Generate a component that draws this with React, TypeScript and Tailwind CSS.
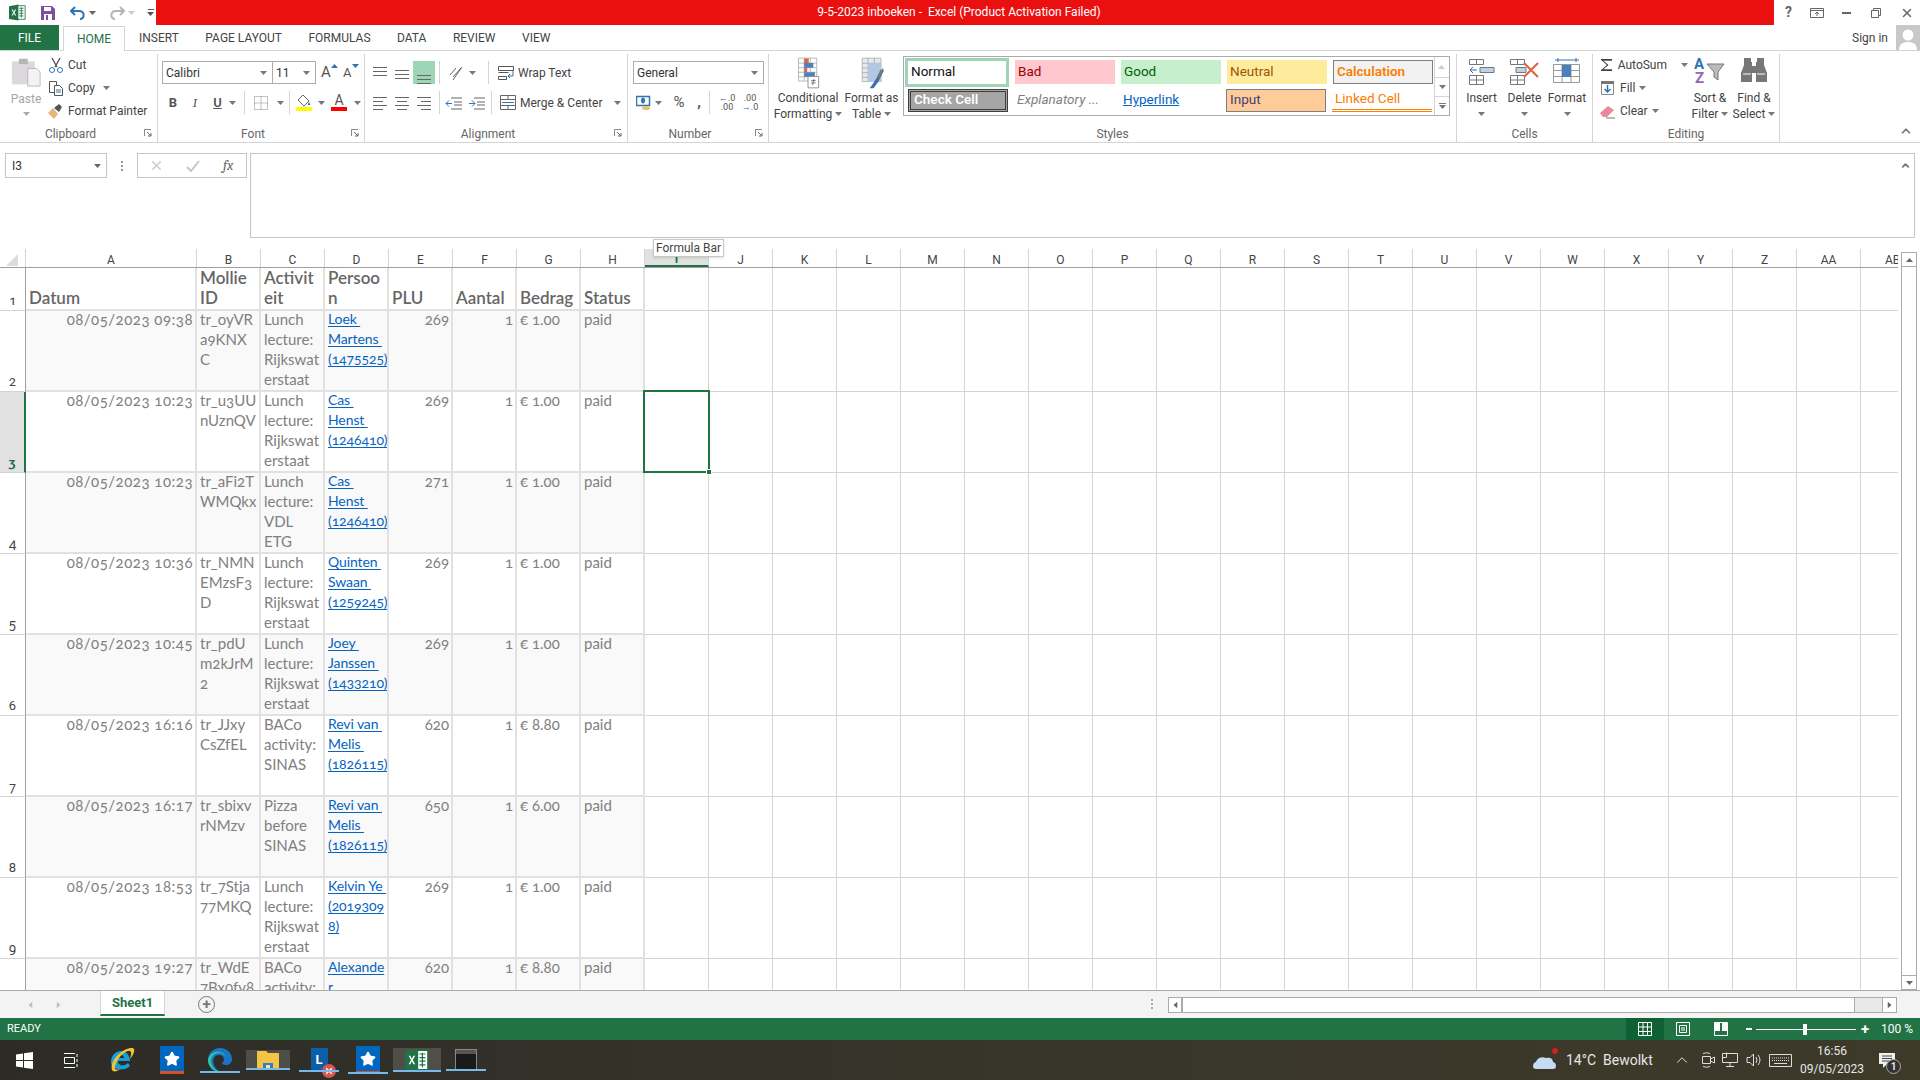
import type { ReactNode } from "react";
import { ChevronUp, Star, X } from "lucide-react";

const CHROME = "font-['Roboto','Liberation_Sans',sans-serif]";
const SHEET = "font-['Lato','Liberation_Sans',sans-serif]";

const COLUMNS = ["J", "K", "L", "M", "N", "O", "P", "Q", "R", "S", "T", "U", "V", "W", "X", "Y", "Z", "AA"];

type Row = {
  id: number;
  date: string;
  mollie: string[];
  activity: string[];
  person: string[];
  plu: string;
  amount: string;
};

const LUNCH = ["Lunch", "lecture:", "Rijkswat", "erstaat"];
const SINAS = ["BACo", "activity:", "SINAS"];

const ROWS: Row[] = [
  { id: 2, date: "08/05/2023 09:38", mollie: ["tr_oyVR", "a9KNX", "C"], activity: LUNCH, person: ["Loek ", "Martens ", "(1475525)"], plu: "269", amount: "1.00" },
  { id: 3, date: "08/05/2023 10:23", mollie: ["tr_u3UU", "nUznQV"], activity: LUNCH, person: ["Cas ", "Henst ", "(1246410)"], plu: "269", amount: "1.00" },
  { id: 4, date: "08/05/2023 10:23", mollie: ["tr_aFi2T", "WMQkx"], activity: ["Lunch", "lecture:", "VDL", "ETG"], person: ["Cas ", "Henst ", "(1246410)"], plu: "271", amount: "1.00" },
  { id: 5, date: "08/05/2023 10:36", mollie: ["tr_NMN", "EMzsF3", "D"], activity: LUNCH, person: ["Quinten ", "Swaan ", "(1259245)"], plu: "269", amount: "1.00" },
  { id: 6, date: "08/05/2023 10:45", mollie: ["tr_pdU", "m2kJrM", "2"], activity: LUNCH, person: ["Joey ", "Janssen ", "(1433210)"], plu: "269", amount: "1.00" },
  { id: 7, date: "08/05/2023 16:16", mollie: ["tr_JJxy", "CsZfEL"], activity: SINAS, person: ["Revi van ", "Melis ", "(1826115)"], plu: "620", amount: "8.80" },
  { id: 8, date: "08/05/2023 16:17", mollie: ["tr_sbixv", "rNMzv"], activity: ["Pizza", "before", "SINAS"], person: ["Revi van ", "Melis ", "(1826115)"], plu: "650", amount: "6.00" },
  { id: 9, date: "08/05/2023 18:53", mollie: ["tr_7Stja", "77MKQ"], activity: LUNCH, person: ["Kelvin Ye ", "(2019309", "8)"], plu: "269", amount: "1.00" },
  { id: 10, date: "08/05/2023 19:27", mollie: ["tr_WdE", "7Bx0fv8", "S"], activity: ["BACo", "activity:", "SINAS"], person: ["Alexande", "r"], plu: "620", amount: "8.80" },
];

function Caret({ color = "#777" }: { color?: string }) {
  return (
    <svg width="7" height="4" viewBox="0 0 7 4" className="shrink-0">
      <path d="M0 0h7L3.5 4z" fill={color} />
    </svg>
  );
}

function ExcelLogo({ size = 20 }: { size?: number }) {
  return (
    <svg width={size} height={size} viewBox="0 0 20 20">
      <path d="M10 2h9v16h-9z" fill="#fff" stroke="#217346" />
      <path d="M12 5h5M12 8h5M12 11h5M12 14h5M14.500 4v12" stroke="#217346" />
      <path d="M0 2.500 11 .5v19L0 17.500z" fill="#217346" />
      <path d="m3 6.500 1.500 0L5.700 9 7 6.500h1.500L6.500 10l2 3.500H7L5.700 11l-1.300 2.500H3L5 10z" fill="#fff" />
    </svg>
  );
}

function Lines({ rows, color = "#666" }: { rows: [number, number, number][]; color?: string }) {
  return (
    <svg width="18" height="16" viewBox="0 0 18 16">
      {rows.map(([x1, x2, y]) => (
        <path key={`${x1}-${y}`} d={`M${x1} ${y + 0.5}H${x2}`} stroke={color} />
      ))}
    </svg>
  );
}

function Sep({ className = "h-[23px]" }: { className?: string }) {
  return <div className={`w-px bg-[#d4d4d4] ${className}`} />;
}

function Launcher() {
  return (
    <svg width="8" height="8" viewBox="0 0 8 8" className="absolute right-[5px] bottom-[6px]">
      <path d="M.5 7V.5H7" fill="none" stroke="#888" />
      <path d="M3 3l4 4M4 7h3V4" fill="none" stroke="#666" />
    </svg>
  );
}

function Group({ width, label, launcher, children }: { width: string; label: string; launcher?: boolean; children: ReactNode }) {
  return (
    <div className={`relative flex h-[89px] shrink-0 flex-col border-r border-[#d4d4d4] ${width}`}>
      <div className="min-h-0 flex-1">{children}</div>
      <div className={`h-[18px] text-center text-[12px] leading-[18px] text-[#666] ${launcher ? "pr-[16px]" : ""}`}>{label}</div>
      {launcher && <Launcher />}
    </div>
  );
}

function StyleCell({ className, children }: { className: string; children: ReactNode }) {
  return <div className={`flex w-[100px] shrink-0 items-center truncate pr-1 pb-[2px] pl-[3px] text-[13.5px] ${className}`}>{children}</div>;
}

function Ribbon() {
  return (
    <div className={`flex h-[93px] shrink-0 overflow-hidden border-y border-[#d4d4d4] bg-white pt-[3px] text-[12px] text-[#444] ${CHROME}`}>
      <Group width="w-[158px]" label="Clipboard" launcher>
        <div className="flex">
          <div className="flex w-[48px] flex-col items-center pt-[2px] text-[#a6a6a6]">
            <svg width="30" height="32" viewBox="0 0 34 36" className="ml-[4px]">
              <path d="M1 6h26v26H1z" fill="#dcd8dc" />
              <path d="M9 3h10v6H9z" fill="#b8b4b8" />
              <path d="M19 14h10l4 4v16H19z" fill="#f4f2f4" stroke="#b5b5b5" />
            </svg>
            <span className="mt-[1px] ml-[4px] leading-[20px]">Paste</span>
            <div className="mt-[3px] ml-[4px]">
              <Caret color="#aaa" />
            </div>
          </div>
          <div className="-mt-[1px] flex flex-col">
            <div className="flex h-[23px] items-center gap-[4px]">
              <svg width="16" height="16" viewBox="0 0 16 16">
                <path d="M4 1l5 9M12 1L7 10" stroke="#555" strokeWidth="1.400" />
                <circle cx="4" cy="13" r="2.500" fill="none" stroke="#2f75b5" />
                <circle cx="12" cy="13" r="2.500" fill="none" stroke="#2f75b5" />
              </svg>
              <span>Cut</span>
            </div>
            <div className="flex h-[23px] items-center gap-[4px]">
              <svg width="16" height="16" viewBox="0 0 16 16" fill="#fff" stroke="#555">
                <path d="M1.500 1.500h7v11h-7z" />
                <path d="M6.500 5.500h5l3 3v7h-8z" />
                <path d="M8 10h5M8 12h5" stroke="#2f75b5" />
              </svg>
              <span>Copy</span>
              <div className="ml-[4px]">
                <Caret />
              </div>
            </div>
            <div className="flex h-[23px] items-center gap-[4px]">
              <svg width="16" height="16" viewBox="0 0 16 16">
                <path d="M0 10l5-5 5 6-4 5z" fill="#e3b778" />
                <path d="M6 5l5-4 3 3-3 5z" fill="#555" />
              </svg>
              <span>Format Painter</span>
            </div>
          </div>
        </div>
      </Group>

      <Group width="w-[207px]" label="Font" launcher>
        <div className="flex items-center pt-[7px] pl-[4px]">
          <div className="flex h-[23px] w-[111px] items-center justify-between border border-[#ababab] pr-[5px] pl-[3px] text-[#333]">
            Calibri
            <Caret />
          </div>
          <div className="-ml-px flex h-[23px] w-[44px] items-center justify-between border border-[#ababab] pr-[5px] pl-[3px] text-[#333]">
            11
            <Caret />
          </div>
          <div className="relative ml-[5px] w-[22px] text-[15px] leading-none text-[#555]">
            A
            <div className="absolute top-[-1px] left-[10px] rotate-180">
              <Caret color="#2f75b5" />
            </div>
          </div>
          <div className="relative w-[20px] text-[13px] leading-none text-[#555]">
            A
            <div className="absolute top-[-2px] left-[9px]">
              <Caret color="#2f75b5" />
            </div>
          </div>
        </div>
        <div className="mt-[7px] flex h-[23px] items-center pl-[3px] text-[13px] text-[#555]">
          <span className="w-[22px] pl-[2px] text-center font-bold">B</span>
          <span className="ml-[1px] w-[22px] text-center font-serif italic">I</span>
          <span className="w-[23px] text-center font-semibold underline">U</span>
          <Caret />
          <Sep className="mx-[8px] h-[23px]" />
          <svg width="16" height="16" viewBox="0 0 16 16" className="mr-[8px]">
            <path d="M1.500 1.500h13v13h-13zM8 1.500v13M1.500 8h13" fill="none" stroke="#888" strokeDasharray="1 1" />
          </svg>
          <Caret />
          <Sep className="mx-[5px] h-[23px]" />
          <div className="flex w-[18px] flex-col items-center">
            <svg width="14" height="13" viewBox="0 0 14 13">
              <path d="M6 1l6 6-5 5-6-6z" fill="#fff" stroke="#666" />
              <path d="M12 8l1.500 3h-3z" fill="#2f75b5" />
            </svg>
            <div className="h-[4px] w-[16px] bg-[#ffff00]" />
          </div>
          <div className="ml-[5px]">
            <Caret />
          </div>
          <div className="ml-[5px] flex w-[18px] flex-col items-center text-[14px] leading-[13px]">
            A
            <div className="h-[4px] w-[16px] bg-[#ff0000]" />
          </div>
          <div className="ml-[6px]">
            <Caret />
          </div>
        </div>
      </Group>

      <Group width="w-[263px]" label="Alignment" launcher>
        <div className="flex h-[30px] items-center pt-[7px] pl-[4px]">
          <div className="flex w-[22px] justify-center">
            <Lines rows={[[2, 16, 2], [2, 16, 6], [2, 16, 10]]} />
          </div>
          <div className="flex w-[22px] justify-center">
            <Lines rows={[[2, 16, 5], [2, 16, 9], [2, 16, 13]]} />
          </div>
          <div className="flex h-[23px] w-[22px] items-end justify-center bg-[#9fd5b7]">
            <Lines rows={[[2, 16, 7], [2, 16, 11], [2, 16, 15]]} />
          </div>
          <Sep className="mx-[4px] h-[23px]" />
          <svg width="18" height="18" viewBox="0 0 18 18" className="ml-[4px]">
            <path d="M2 11l6-7M5 13l8-9M14 3l-9 13" stroke="#666" fill="none" />
          </svg>
          <div className="mr-[12px] ml-[3px]">
            <Caret />
          </div>
          <Sep className="mr-[8px] h-[23px]" />
          <svg width="18" height="16" viewBox="0 0 18 16" className="mr-[3px]">
            <path d="M1.500 1.500h15v4h-15zM1.500 7.500h10M1.500 11.500h8v3h-8z" fill="none" stroke="#555" />
            <path d="M16 6v5h-5l2-2m-2 2 2 2" fill="none" stroke="#2f75b5" />
          </svg>
          <span>Wrap Text</span>
        </div>
        <div className="mt-[7px] flex h-[23px] items-center pl-[4px]">
          <div className="flex w-[22px] justify-center">
            <Lines rows={[[2, 16, 2], [2, 12, 6], [2, 16, 10], [2, 12, 14]]} />
          </div>
          <div className="flex w-[22px] justify-center">
            <Lines rows={[[2, 16, 2], [4, 14, 6], [2, 16, 10], [4, 14, 14]]} />
          </div>
          <div className="flex w-[22px] justify-center">
            <Lines rows={[[2, 16, 2], [6, 16, 6], [2, 16, 10], [6, 16, 14]]} />
          </div>
          <Sep className="mx-[4px] h-[23px]" />
          <svg width="18" height="16" viewBox="0 0 18 16" className="ml-[1px]">
            <path d="M6 3h11M9 7h8M9 10h8M6 14h11" stroke="#666" />
            <path d="M1 8.500h6M4 5.500l-3 3 3 3" stroke="#2f75b5" fill="none" />
          </svg>
          <svg width="18" height="16" viewBox="0 0 18 16" className="mr-[5px] ml-[5px]">
            <path d="M6 3h11M9 7h8M9 10h8M6 14h11" stroke="#666" />
            <path d="M1 8.500h6M4 5.500l3 3-3 3" stroke="#2f75b5" fill="none" />
          </svg>
          <Sep className="mr-[7px] h-[23px]" />
          <svg width="18" height="17" viewBox="0 0 18 17" className="mr-[3px]">
            <path d="M1.500 1.500h15v14h-15zM1.500 5.500h15M1.500 11.500h15M9 1.500v4M9 11.500v4" fill="none" stroke="#666" />
            <path d="M3 8.500h12" stroke="#2f75b5" />
          </svg>
          <span>Merge &amp; Center</span>
          <div className="ml-[12px]">
            <Caret />
          </div>
        </div>
      </Group>

      <Group width="w-[141px]" label="Number" launcher>
        <div className="pt-[7px] pl-[5px]">
          <div className="flex h-[23px] w-[131px] items-center justify-between border border-[#ababab] pr-[5px] pl-[3px] text-[#333]">
            General
            <Caret />
          </div>
        </div>
        <div className="mt-[7px] flex h-[23px] items-center pl-[8px] text-[#555]">
          <svg width="16" height="16" viewBox="0 0 16 16" className="mr-[3px]">
            <path d="M.500 1.500h13v9H.500z" fill="#fff" stroke="#2f75b5" strokeWidth="1.500" />
            <ellipse cx="7" cy="5.500" rx="2" ry="3" fill="#2f75b5" />
            <ellipse cx="10" cy="13" rx="4" ry="2" fill="#e3c477" />
          </svg>
          <Caret />
          <span className="ml-[9px] w-[16px] text-center text-[15px]">%</span>
          <span className="ml-[7px] w-[10px] text-center text-[15px] font-bold">,</span>
          <Sep className="mx-[5px] h-[23px]" />
          <span className="w-[24px] text-center text-[9px] leading-[9px]">
            <span className="text-[#2f75b5]">←</span>.0
            <br />
            .00
          </span>
          <span className="w-[22px] text-center text-[9px] leading-[9px]">
            .00
            <br />
            <span className="text-[#2f75b5]">→</span>.0
          </span>
        </div>
      </Group>

      <Group width="w-[688px]" label="Styles">
        <div className="flex">
          <div className="flex w-[74px] flex-col items-center pt-[3px] pl-[4px] text-center leading-[16px]">
            <svg width="26" height="32" viewBox="0 0 30 42">
              <path d="M2.500 1.500h24v30h-24zM2.500 8h24M2.500 14h24M2.500 20h24M2.500 26h24M10 1.500v30M18 1.500v30" fill="#fff" stroke="#a6a6a6" />
              <path d="M10 2h6v6h-6zM10 14h4v6h-4z" fill="#d9644a" />
              <path d="M10 8h12v6H10zM10 20h14v6H10z" fill="#4a81bd" />
              <path d="M15 25.500h14v15H15z" fill="#fff" stroke="#777" />
              <path d="M19 31h6M19 34h6M23 29l-2 8" stroke="#555" fill="none" />
            </svg>
            <span className="mt-[1px] whitespace-nowrap">Conditional</span>
            <span className="flex items-center gap-[3px]">
              Formatting
              <Caret />
            </span>
          </div>
          <div className="flex w-[57px] flex-col items-center pt-[3px] text-center leading-[16px]">
            <svg width="26" height="32" viewBox="0 0 30 41">
              <path d="M2.500 1.500h24v30h-24zM2.500 8h24M2.500 14h24M2.500 20h24M2.500 26h24M10 1.500v30M18 1.500v30" fill="#e4e9f2" stroke="#a6a6a6" />
              <path d="M10 8h17v24H10z" fill="#b4c7e2" />
              <path d="M29 14 17 33l-5 7h5l6-8 7-14z" fill="#3f6fa8" />
              <path d="M26 16l3 2-5 10-3-2z" fill="#777" />
            </svg>
            <span className="mt-[1px] whitespace-nowrap">Format as</span>
            <span className="flex items-center gap-[3px]">
              Table
              <Caret />
            </span>
          </div>
          <div className="mt-[2px] ml-[3px] flex h-[60px] w-[547px] border border-[#ababab]">
            <div className="flex flex-1 flex-col">
              <div className="flex h-[30px] items-center gap-[6px] pl-[1px]">
                <StyleCell className="h-[29px] w-[104px] border-[3px] border-[#9fd5b7] bg-white text-[#111]">Normal</StyleCell>
                <StyleCell className="h-[24px] bg-[#ffc7ce] text-[#9c0006]">Bad</StyleCell>
                <StyleCell className="h-[24px] bg-[#c6efce] text-[#006100]">Good</StyleCell>
                <StyleCell className="h-[24px] bg-[#ffeb9c] text-[#9c5700]">Neutral</StyleCell>
                <StyleCell className="h-[24px] border border-[#7f7f7f] bg-[#f2f2f2] font-semibold text-[#fa7d00]">Calculation</StyleCell>
              </div>
              <div className="flex flex-1 items-start gap-[6px] pt-[2px] pl-[4px]">
                <StyleCell className="h-[23px] border-[3px] border-double border-[#3f3f3f] bg-[#a5a5a5] font-semibold text-white">Check Cell</StyleCell>
                <StyleCell className="h-[23px] text-[#7f7f7f] italic">Explanatory ...</StyleCell>
                <StyleCell className="h-[23px] text-[#0563c1]">
                  <span className="underline">Hyperlink</span>
                </StyleCell>
                <StyleCell className="h-[23px] border border-[#7f7f7f] bg-[#ffcc99] text-[#3f3f76]">Input</StyleCell>
                <StyleCell className="h-[23px] border-b-[3px] border-double border-[#ff8001] text-[#fa7d00]">Linked Cell</StyleCell>
              </div>
            </div>
            <div className="flex w-[15px] flex-col border-l border-[#d4d4d4]">
              <div className="flex h-[20px] rotate-180 items-center justify-center">
                <Caret color="#ccc" />
              </div>
              <div className="flex h-[20px] items-center justify-center border-y border-[#d4d4d4]">
                <Caret />
              </div>
              <div className="flex h-[18px] flex-col items-center justify-center gap-[1px]">
                <div className="h-px w-[7px] bg-[#777]" />
                <Caret />
              </div>
            </div>
          </div>
        </div>
      </Group>

      <Group width="w-[136px]" label="Cells">
        <div className="flex pt-[3px] pl-[3px] leading-[16px]">
          <div className="flex w-[43px] flex-col items-center">
            <svg width="28" height="30" viewBox="0 0 28 30" fill="none" stroke="#777">
              <path d="M1.500 2.500h14v5h-14zM8.500 2.500v5M1.500 18.500h14v9h-14zM1.500 23h14M8.500 18.500v9" />
              <path d="M12 10.500h14v5H12z" fill="#bcd3e8" />
              <path d="M2 13h7M5 10l-3 3 3 3" stroke="#2f75b5" />
            </svg>
            <span className="mt-[3px]">Insert</span>
            <div className="mt-[6px]">
              <Caret />
            </div>
          </div>
          <div className="flex w-[43px] flex-col items-center">
            <svg width="32" height="30" viewBox="0 0 32 30" fill="none" stroke="#777">
              <path d="M1.500 2.500h14v5h-14zM8.500 2.500v5M1.500 18.500h14v9h-14zM1.500 23h14M8.500 18.500v9" />
              <path d="M7 10.500h10v5H7z" fill="#bcd3e8" />
              <path d="M15 6l14 14M29 6 15 20" stroke="#e0603f" strokeWidth="2" />
            </svg>
            <span className="mt-[3px]">Delete</span>
            <div className="mt-[6px]">
              <Caret />
            </div>
          </div>
          <div className="flex w-[42px] flex-col items-center">
            <svg width="30" height="30" viewBox="0 0 30 30" fill="none" stroke="#999">
              <path d="M3 3h24M6 1v4M24 1v4" stroke="#2f75b5" />
              <path d="M1.500 7.500h26v18h-26zM1.500 13.500h26M1.500 19.500h26M10 7.500v18M19 7.500v18" />
              <path d="M10 8h9v12h-9z" fill="#4a81bd" stroke="none" />
            </svg>
            <span className="mt-[3px]">Format</span>
            <div className="mt-[6px]">
              <Caret />
            </div>
          </div>
        </div>
      </Group>

      <Group width="w-[187px]" label="Editing">
        <div className="flex">
          <div className="-mt-[1px] flex w-[95px] flex-col pl-[7px]">
            <div className="flex h-[23px] items-center gap-[4px]">
              <svg width="16" height="16" viewBox="0 0 16 16">
                <path d="M1 1h13v2H4l6 5-6 5h10v2H1v-1l7-6-7-6z" fill="#444" />
              </svg>
              <span>AutoSum</span>
              <div className="ml-[10px]">
                <Caret />
              </div>
            </div>
            <div className="flex h-[23px] items-center gap-[4px]">
              <svg width="16" height="16" viewBox="0 0 16 16">
                <path d="M1.500 1.500h12v13h-12z" fill="#fff" stroke="#888" />
                <path d="M1 1h13v3H1z" fill="#777" />
                <path d="M7.500 5v7M4.500 9l3 3 3-3" fill="none" stroke="#2f75b5" strokeWidth="1.500" />
              </svg>
              <span>Fill</span>
              <Caret />
            </div>
            <div className="flex h-[23px] items-center gap-[4px]">
              <svg width="16" height="16" viewBox="0 0 16 16">
                <path d="M0 10l8-7 6 4-7 7H3z" fill="#e88a9b" />
                <path d="M6 15h9" stroke="#777" />
              </svg>
              <span>Clear</span>
              <Caret />
            </div>
          </div>
          <div className="flex w-[44px] flex-col items-center pt-[2px] leading-[16px]">
            <svg width="32" height="28" viewBox="0 0 32 28">
              <path d="M13 8h17l-6 8v8l-4-3v-5z" fill="#bbb" stroke="#777" />
              <text x="0" y="13" fontSize="15" fontWeight="700" fill="#2f75b5">A</text>
              <text x="1" y="27" fontSize="15" fontWeight="700" fill="#9366b4">Z</text>
            </svg>
            <span className="mt-[6px]">Sort &amp;</span>
            <span className="flex items-center gap-[3px]">
              Filter
              <Caret />
            </span>
          </div>
          <div className="flex w-[44px] flex-col items-center pt-[2px] leading-[16px]">
            <svg width="28" height="28" viewBox="0 0 28 28" fill="#777">
              <path d="M4 2h7v4h1v4h4V6h1V2h7v7l3 8v9H16v-9h-4v9H1v-9l3-8z" />
              <path d="M3 18h8M17 18h8" stroke="#fff" />
            </svg>
            <span className="mt-[6px]">Find &amp;</span>
            <span className="flex items-center gap-[3px]">
              Select
              <Caret />
            </span>
          </div>
        </div>
      </Group>

      <div className="relative flex-1">
        <ChevronUp size={14} strokeWidth={3} className="absolute right-[7px] bottom-[4px] text-[#777]" />
      </div>
    </div>
  );
}

function FormulaBar() {
  return (
    <div className={`flex h-[106px] shrink-0 items-start bg-white pt-[10px] pr-[5px] pl-[5px] text-[12px] text-[#333] ${CHROME}`}>
      <div className="flex h-[25px] w-[102px] items-center justify-between border border-[#c6c6c6] pr-[5px] pl-[6px]">
        I3
        <Caret color="#666" />
      </div>
      <div className="flex h-[25px] w-[30px] flex-col items-center justify-center gap-[2px]">
        <div className="h-[2px] w-[2px] bg-[#999]" />
        <div className="h-[2px] w-[2px] bg-[#999]" />
        <div className="h-[2px] w-[2px] bg-[#999]" />
      </div>
      <div className="flex h-[25px] w-[110px] items-center border border-[#c6c6c6] text-[#666]">
        <div className="flex w-[36px] justify-center">
          <X size={15} className="text-[#c6c6c6]" />
        </div>
        <svg width="14" height="12" viewBox="0 0 14 12" className="ml-[12px]">
          <path d="M1 7l4 4 8-10" fill="none" stroke="#c6c6c6" strokeWidth="2" />
        </svg>
        <span className="ml-[23px] font-serif text-[14px] italic">fx</span>
      </div>
      <div className="ml-[3px] flex h-[85px] flex-1 justify-end border border-[#c6c6c6] pt-[6px] pr-[3px]">
        <ChevronUp size={11} strokeWidth={4} className="text-[#777]" />
      </div>
    </div>
  );
}

function ColHead({ label, width = "w-16", active }: { label: string; width?: string; active?: boolean }) {
  return (
    <div
      className={`flex h-full shrink-0 items-center justify-center border-r border-[#d4d4d4] pt-[3px] text-[12px] leading-none text-[#444] ${width} ${
        active ? "border-b-2 border-b-[#217346] bg-[#e1e1e1] font-bold text-[#217346]" : ""
      }`}
    >
      {label}
    </div>
  );
}

function HeaderRow() {
  return (
    <div className={`flex h-[19px] shrink-0 border-b border-[#9f9f9f] ${CHROME}`}>
      <div className="flex h-full w-[26px] shrink-0 items-end justify-end border-r border-[#d4d4d4] pr-[7px] pb-[1px]">
        <svg width="12" height="12" viewBox="0 0 12 12">
          <path d="M12 0v12H0z" fill="#dcdcdc" />
        </svg>
      </div>
      <ColHead label="A" width="w-[171px]" />
      {["B", "C", "D", "E", "F", "G", "H"].map((c) => (
        <ColHead key={c} label={c} />
      ))}
      <ColHead label="I" active />
      {COLUMNS.map((c) => (
        <ColHead key={c} label={c} />
      ))}
      <ColHead label="AB" width="w-[38px] overflow-hidden border-r-0 !justify-start pl-[24px]" />
    </div>
  );
}

function DataCell({ width = "w-16", tint, align, children }: { width?: string; tint?: boolean; align?: string; children: ReactNode }) {
  return (
    <div className={`h-full shrink-0 overflow-hidden border-r-2 border-b-2 border-[#e1e1e1] pr-[2px] pl-[3px] ${width} ${tint ? "bg-[#f9f9f9]" : "bg-white"} ${align ?? ""}`}>
      {children}
    </div>
  );
}

function TextLines({ lines }: { lines: string[] }) {
  return (
    <>
      {lines.map((line) => (
        <div key={line} className="whitespace-pre">
          {line}
        </div>
      ))}
    </>
  );
}

function EmptyCells({ selected }: { selected?: boolean }) {
  return (
    <>
      <div className="relative h-full w-16 shrink-0 border-r border-b border-[#d4d4d4]">
        {selected && (
          <div className="absolute top-[-2px] left-[-2px] z-10 h-[83px] w-[67px] border-2 border-[#217346]">
            <div className="absolute right-[-4px] bottom-[-4px] h-[6px] w-[6px] border border-white bg-[#217346]" />
          </div>
        )}
      </div>
      {COLUMNS.map((c) => (
        <div key={c} className="h-full w-16 shrink-0 border-r border-b border-[#d4d4d4]" />
      ))}
      <div className="h-full w-[38px] shrink-0 border-r border-b border-r-[#9f9f9f] border-b-[#d4d4d4]" />
    </>
  );
}

function RowHead({ id, active, height = "h-full" }: { id: number; active?: boolean; height?: string }) {
  return (
    <div
      className={`flex w-[26px] shrink-0 items-end justify-center border-r border-b border-r-[#9f9f9f] border-b-[#d4d4d4] pb-[1px] text-[13px] leading-[17px] ${CHROME} ${height} ${
        active ? "border-r-2 border-r-[#217346] bg-[#e1e1e1] font-bold text-[#217346]" : "text-[#444]"
      }`}
    >
      {id}
    </div>
  );
}

function TitleRow() {
  const bold = "flex h-full flex-col justify-end pb-[1px] text-[17px] font-semibold text-[#666]";
  return (
    <div className="flex h-[43px] shrink-0">
      <RowHead id={1} />
      <DataCell width="w-[171px]">
        <div className={bold}>Datum</div>
      </DataCell>
      {[["Mollie", "ID"], ["Activit", "eit"], ["Persoo", "n"], ["PLU"], ["Aantal"], ["Bedrag"], ["Status"]].map((lines) => (
        <DataCell key={lines[0]}>
          <div className={bold}>
            <TextLines lines={lines} />
          </div>
        </DataCell>
      ))}
      <EmptyCells />
    </div>
  );
}

function DataRow({ row }: { row: Row }) {
  const tint = row.id % 2 === 0;
  return (
    <div className="flex h-[81px] shrink-0">
      <RowHead id={row.id} active={row.id === 3} />
      <DataCell width="w-[171px]" tint={tint} align="text-right">
        <div className="-mt-[2px] tracking-[0.5px]">{row.date}</div>
      </DataCell>
      <DataCell tint={tint}>
        <div className="-mt-[2px]">
          <TextLines lines={row.mollie} />
        </div>
      </DataCell>
      <DataCell tint={tint}>
        <div className="-mt-[2px]">
          <TextLines lines={row.activity} />
        </div>
      </DataCell>
      <DataCell tint={tint}>
        <div className="-mt-[2px] text-[14px] tracking-[-0.1px] text-[#0563c1] underline underline-offset-2">
          <TextLines lines={row.person} />
        </div>
      </DataCell>
      <DataCell tint={tint} align="text-right">
        <div className="-mt-[2px]">{row.plu}</div>
      </DataCell>
      <DataCell tint={tint} align="text-right">
        <div className="-mt-[2px]">1</div>
      </DataCell>
      <DataCell tint={tint}>
        <div className="-mt-[2px]">€ {row.amount}</div>
      </DataCell>
      <DataCell tint={tint}>
        <div className="-mt-[2px]">paid</div>
      </DataCell>
      <EmptyCells selected={row.id === 3} />
    </div>
  );
}

function ScrollArrow({ up }: { up?: boolean }) {
  return (
    <div className="flex h-[15px] w-[16px] shrink-0 items-center justify-center border border-[#ababab] bg-white">
      <div className={up ? "rotate-180" : ""}>
        <Caret color="#666" />
      </div>
    </div>
  );
}

function Grid() {
  return (
    <div className="relative flex min-h-0 flex-1 bg-white">
      <div className={`min-w-0 flex-1 overflow-hidden text-[15px] leading-[20px] text-[#808080] oldstyle-nums ${SHEET}`}>
        <HeaderRow />
        <TitleRow />
        {ROWS.map((row) => (
          <DataRow key={row.id} row={row} />
        ))}
      </div>
      <div className="flex w-[22px] shrink-0 flex-col items-center bg-white pt-[3px]">
        <ScrollArrow up />
        <div className="min-h-0 flex-1 border-x border-[#ababab] bg-white">
          <div className="h-full w-[14px]" />
        </div>
        <ScrollArrow />
      </div>
      {/* Tooltip hanging over the formula bar edge */}
      <div className={`absolute top-[-10px] left-[653px] z-20 border border-[#c8c8c8] bg-white px-[2px] text-[12px] leading-[16px] whitespace-nowrap text-[#444] shadow-sm ${CHROME}`}>
        Formula Bar
      </div>
    </div>
  );
}

function SheetTabs() {
  return (
    <div className={`flex h-[28px] shrink-0 items-start border-t border-[#ababab] bg-[#f3f3f3] text-[12px] ${CHROME}`}>
      <div className="flex h-full w-[100px] items-center gap-[21px] pl-[27px]">
        <div className="rotate-90">
          <Caret color="#c0c0c0" />
        </div>
        <div className="-rotate-90">
          <Caret color="#c0c0c0" />
        </div>
      </div>
      <div className="flex h-[25px] w-[65px] items-center justify-center border-x border-b-2 border-x-[#d4d4d4] border-b-[#217346] bg-white text-[13px] font-bold text-[#217346]">
        Sheet1
      </div>
      <div className="ml-[33px] flex h-[26px] items-center">
        <div className="flex h-[17px] w-[17px] items-center justify-center rounded-full border border-[#777] text-[15px] leading-none font-bold text-[#777]">
          +
        </div>
      </div>
      <div className="ml-[936px] flex h-[26px] flex-col items-center justify-center gap-[2px]">
        <div className="h-[2px] w-[2px] bg-[#aaa]" />
        <div className="h-[2px] w-[2px] bg-[#aaa]" />
        <div className="h-[2px] w-[2px] bg-[#aaa]" />
      </div>
      <div className="mt-[6px] ml-[15px] flex h-[16px] w-[729px] border border-[#ababab] bg-[#e9e9e9]">
        <div className="flex w-[14px] items-center justify-center border-r-2 border-[#ababab] bg-white">
          <div className="rotate-90">
            <Caret color="#666" />
          </div>
        </div>
        <div className="w-[672px] border-r border-[#ababab] bg-white" />
        <div className="flex-1" />
        <div className="flex w-[14px] items-center justify-center border-l border-[#ababab] bg-white">
          <div className="-rotate-90">
            <Caret color="#666" />
          </div>
        </div>
      </div>
    </div>
  );
}

function StatusBar() {
  return (
    <div className={`flex h-[22px] shrink-0 items-center bg-[#217346] pl-[7px] text-[11px] text-white ${CHROME}`}>
      <span>READY</span>
      <div className="ml-auto flex h-full items-center">
        <div className="flex h-full w-[38px] items-center justify-center bg-[#0f6035]">
          <svg width="14" height="14" viewBox="0 0 14 14" fill="none" stroke="#fff">
            <path d="M.5.5h13v13H.5zM.5 5h13M.5 9.500h13M5 .5v13M9.500.5v13" />
          </svg>
        </div>
        <div className="flex w-[38px] justify-center">
          <svg width="14" height="14" viewBox="0 0 14 14" fill="none" stroke="#fff">
            <path d="M.5.5h13v13H.5zM3.500 3.500h7v7h-7zM5 6h4M5 8h4" />
          </svg>
        </div>
        <div className="flex w-[38px] justify-center">
          <svg width="14" height="14" viewBox="0 0 14 14">
            <path d="M.5.5h13v13H.5z" fill="none" stroke="#fff" />
            <path d="M1 1h5v8H1zM8 1h5v8H8z" fill="#fff" />
          </svg>
        </div>
        <div className="ml-[6px] h-[2px] w-[6px] bg-white" />
        <div className="relative ml-[4px] h-px w-[100px] bg-white">
          <div className="absolute top-[-5px] left-[47px] h-[11px] w-[4px] bg-white" />
        </div>
        <span className="ml-[3px] w-[12px] text-center text-[15px] leading-none font-bold">+</span>
        <span className="w-[49px] pr-[7px] text-right text-[12px]">100 %</span>
      </div>
    </div>
  );
}

function TaskSlot({ active, running, width = "w-[40px]", children }: { active?: boolean; running?: boolean; width?: string; children: ReactNode }) {
  return (
    <div className={`relative flex h-full shrink-0 items-center justify-center ${width} ${active ? "bg-white/15" : ""}`}>
      {children}
      {running && <div className="absolute right-0 bottom-0 left-0 h-[2px] bg-[#76b9ed]" />}
    </div>
  );
}

function StoreIcon() {
  return (
    <div className="flex h-[28px] w-[24px] flex-col">
      <div className="flex flex-1 items-center justify-center bg-[#0067c0]">
        <Star size={16} fill="#fff" stroke="#fff" />
      </div>
      <div className="h-[3px] bg-[#d8501e]" />
    </div>
  );
}

function Taskbar() {
  return (
    <div className={`flex h-[40px] shrink-0 items-center bg-gradient-to-r from-[#2c2b26] via-[#37352a] to-[#3e3a2a] text-white ${CHROME}`}>
      <TaskSlot width="w-[48px]">
        <svg width="17" height="17" viewBox="0 0 17 17" fill="#fff">
          <path d="M0 2.500 7 1.500v6.500H0zM8 1.300 17 0v8H8zM0 9h7v6.500l-7-1zM8 9h9v8l-9-1.300z" />
        </svg>
      </TaskSlot>
      <TaskSlot width="w-[46px]">
        <svg width="17" height="17" viewBox="0 0 17 17" fill="none" stroke="#fff">
          <path d="M1 1.500h11M1 15.500h11M1.500 5.500h10v6h-10zM14 2v3M14 7v3M14 12v3" />
        </svg>
      </TaskSlot>
      <TaskSlot width="w-[56px]">
        <svg width="26" height="28" viewBox="0 0 26 28">
          <path d="M2 16c0-7 5-11 10-11s9 4 9 10H9c0 5 6 6 10 2l2 3c-6 6-19 4-19-4zM9 12h6c0-4-6-4-6 0z" fill="#1a9ed8" />
          <path d="M3 24C0 15 14 1 24 2c3 2 0 7-3 11 1-4 2-7 0-8C14 4 5 17 6 23c1 1 3 1 5 0-3 3-7 3-8 1z" fill="#f4c430" />
        </svg>
      </TaskSlot>
      <TaskSlot width="w-[44px]">
        <StoreIcon />
      </TaskSlot>
      <div className="ml-[6px]">
        <TaskSlot running width="w-[40px]">
          <svg width="26" height="26" viewBox="0 0 26 26">
            <path d="M1 13C1 6 6 1 13 1c7 0 12 5 12 11 0 4-3 6-6 6-2 0-4-1-4-2 3-1 3-8-3-8-5 0-7 5-5 10 1 3 4 6 8 7-8 1-14-5-14-12z" fill="#1a75c8" />
            <path d="M1 13C2 6 9 4 13 5c4 1 6 4 6 7 0-3-3-6-7-6-5 0-8 4-8 8 0 5 5 10 9 11-6 0-12-5-12-12z" fill="#2ec5a2" />
          </svg>
        </TaskSlot>
      </div>
      <div className="ml-[6px]">
        <TaskSlot active running width="w-[44px]">
          <svg width="22" height="20" viewBox="0 0 22 20">
            <path d="M0 1h9l2 2h11v17H0z" fill="#f6c445" />
            <path d="M6 13h10v7H6z" fill="#2d7dd2" />
            <path d="M9 15h4v5H9z" fill="#f6e39a" />
          </svg>
        </TaskSlot>
      </div>
      <div className="ml-[9px]">
        <TaskSlot running width="w-[40px]">
          <div className="relative">
            <div className="flex h-[24px] w-[17px] items-center justify-center bg-[#0a5fa8] text-[13px] font-bold">L</div>
            <div className="absolute right-[-8px] bottom-[-6px] flex h-[14px] w-[14px] items-center justify-center rounded-full bg-[#d9534f]">
              <X size={10} strokeWidth={3} />
            </div>
          </div>
        </TaskSlot>
      </div>
      <div className="ml-[9px]">
        <TaskSlot running width="w-[40px]">
          <StoreIcon />
        </TaskSlot>
      </div>
      <div className="ml-[5px]">
        <TaskSlot active running width="w-[48px]">
          <ExcelLogo size={24} />
        </TaskSlot>
      </div>
      <div className="ml-[5px]">
        <TaskSlot running width="w-[40px]">
          <div className="h-[22px] w-[22px] border border-[#888] bg-[#1a1a1a]">
            <div className="h-[4px] bg-[#555]" />
          </div>
        </TaskSlot>
      </div>

      <div className="ml-auto flex h-full items-center text-[#e6e6e6]">
        <div className="relative mr-[9px]">
          <svg width="24" height="18" viewBox="0 0 24 18">
            <path d="M3 18c-4 0-4-6 0-7 1-4 6-6 10-4 3-1 7 0 7 4 4 1 4 7 0 7z" fill="#c4dcf4" />
          </svg>
          <div className="absolute top-[-3px] right-[-1px] h-[6px] w-[6px] rounded-full bg-[#d02020]" />
        </div>
        <span className="w-[37px] text-[14px]">14°C</span>
        <span className="w-[69px] text-[14px]">Bewolkt</span>
        <div className="flex w-[20px] justify-center">
          <ChevronUp size={18} strokeWidth={1.300} />
        </div>
        <svg width="14" height="16" viewBox="0 0 14 16" fill="none" stroke="#ddd" className="ml-[9px]">
          <path d="M1.500 4.500h8v7h-8zM9.500 7l4-2v6l-4-2M2 1.500q3.500-1.500 7 0M2 14.500q3.500 1.500 7 0" />
        </svg>
        <svg width="16" height="16" viewBox="0 0 16 16" fill="none" stroke="#ddd" className="ml-[7px]">
          <path d="M.5 1.500h15v9H.5zM4.500.5v5h-4M8 10.500v4M4 14.500h8" />
        </svg>
        <svg width="16" height="16" viewBox="0 0 16 16" fill="none" stroke="#ddd" className="ml-[8px]">
          <path d="M1 5.500h3L7.500 2v12L4 10.500H1zM10 5q2 3 0 6M12 3q4 5 0 10" />
        </svg>
        <svg width="23" height="13" viewBox="0 0 23 13" fill="none" stroke="#ddd" className="ml-[7px]">
          <path d="M.5.5h22v12H.5z" />
          <path d="M3 4h17M3 6.500h17" strokeDasharray="1 1" />
          <path d="M5 9.500h13" />
        </svg>
        <div className="ml-[5px] flex w-[70px] flex-col items-center text-[12px] leading-[18px]">
          <span>16:56</span>
          <span>09/05/2023</span>
        </div>
        <div className="relative mr-[25px] ml-[12px]">
          <svg width="16" height="15" viewBox="0 0 16 15">
            <path d="M0 0h16v11H8l-4 4v-4H0z" fill="#eee" />
            <path d="M3 3h10M3 5.500h10M3 8h7" stroke="#444" />
          </svg>
          <div className="absolute top-[6px] left-[7px] flex h-[15px] w-[15px] items-center justify-center rounded-full border border-[#aaa] bg-[#333] text-[10px] font-bold">
            1
          </div>
        </div>
      </div>
    </div>
  );
}

export default function App() {
  return (
    <div className="flex h-[1080px] w-[1920px] flex-col overflow-hidden bg-white">
      <div className={`flex h-[25px] shrink-0 items-center ${CHROME}`}>
        <div className="flex h-full w-[156px] shrink-0 items-center pl-[9px]">
          <ExcelLogo size={17} />
          <svg width="16" height="16" viewBox="0 0 16 16" className="ml-[14px]">
            <path d="M1 1h11l3 3v11H1z" fill="#7f4f9f" />
            <path d="M4 2h7v4H4z" fill="#fff" />
            <path d="M4 9h8v6H4z" fill="#fff" />
            <path d="M6 10h2v5H6z" fill="#7f4f9f" />
          </svg>
          <svg width="16" height="14" viewBox="0 0 16 14" fill="none" stroke="#2f75b5" strokeWidth="2" className="ml-[14px]">
            <path d="M5 1 1 5l4 4M1 5h8c6 0 6 8 1 8" />
          </svg>
          <div className="ml-[3px]">
            <Caret color="#666" />
          </div>
          <svg width="16" height="14" viewBox="0 0 16 14" fill="none" stroke="#b5b5b5" strokeWidth="2" className="ml-[13px]">
            <path d="m11 1 4 4-4 4M15 5H7c-6 0-6 8-1 8" />
          </svg>
          <div className="ml-[3px]">
            <Caret color="#ccc" />
          </div>
          <div className="ml-[12px] flex flex-col items-center gap-[2px]">
            <div className="h-px w-[6px] bg-[#555]" />
            <Caret color="#555" />
          </div>
        </div>
        <div className="flex h-full flex-1 items-center justify-center bg-[#ea1010] pb-[1px] text-[12px] text-white">
          <span className="mr-[12px]">9-5-2023 inboeken -&nbsp; Excel (Product Activation Failed)</span>
        </div>
        <div className="flex h-full w-[146px] shrink-0 items-center text-[#666]">
          <span className="ml-[11px] w-[22px] text-[14px] font-bold">?</span>
          <svg width="14" height="10" viewBox="0 0 14 10" fill="none" stroke="#666" className="ml-[3px]">
            <path d="M.5.5h13v9H.5zM.5 2.500h13M7 8V4M5 6l2-2 2 2" />
          </svg>
          <div className="ml-[18px] h-[2px] w-[9px] bg-[#666]" />
          <svg width="10" height="10" viewBox="0 0 10 10" fill="none" stroke="#666" className="ml-[20px]">
            <path d="M.5 2.500h7v7h-7zM2.500 2.500v-2h7v7h-2" />
          </svg>
          <X size={14} strokeWidth={2.500} className="ml-[19px]" />
        </div>
      </div>

      <div className={`flex h-[25px] shrink-0 items-end bg-white text-[12px] text-[#444] ${CHROME}`}>
        <div className="flex h-full w-[59px] items-center justify-center bg-[#217346] text-white">FILE</div>
        <div className="relative z-10 ml-[4px] -mb-px flex h-full w-[62px] items-center justify-center border-x border-t border-[#d4d4d4] bg-white pb-px text-[#217346]">HOME</div>
        <div className="ml-[14px] flex h-full items-center gap-[26.5px]">
          <span>INSERT</span>
          <span>PAGE LAYOUT</span>
          <span>FORMULAS</span>
          <span>DATA</span>
          <span>REVIEW</span>
          <span>VIEW</span>
        </div>
        <div className="ml-auto flex h-full items-center">
          <span className="mr-[8px]">Sign in</span>
          <div className="flex h-[25px] w-[24px] items-end justify-center overflow-hidden bg-[#c8c8c8]">
            <svg width="20" height="22" viewBox="0 0 20 22" fill="#fff">
              <circle cx="10" cy="7" r="5.500" />
              <path d="M1 22c0-6 4-8 9-8s9 2 9 8z" />
            </svg>
          </div>
        </div>
      </div>

      <Ribbon />
      <FormulaBar />
      <Grid />
      <SheetTabs />
      <StatusBar />
      <Taskbar />
    </div>
  );
}
